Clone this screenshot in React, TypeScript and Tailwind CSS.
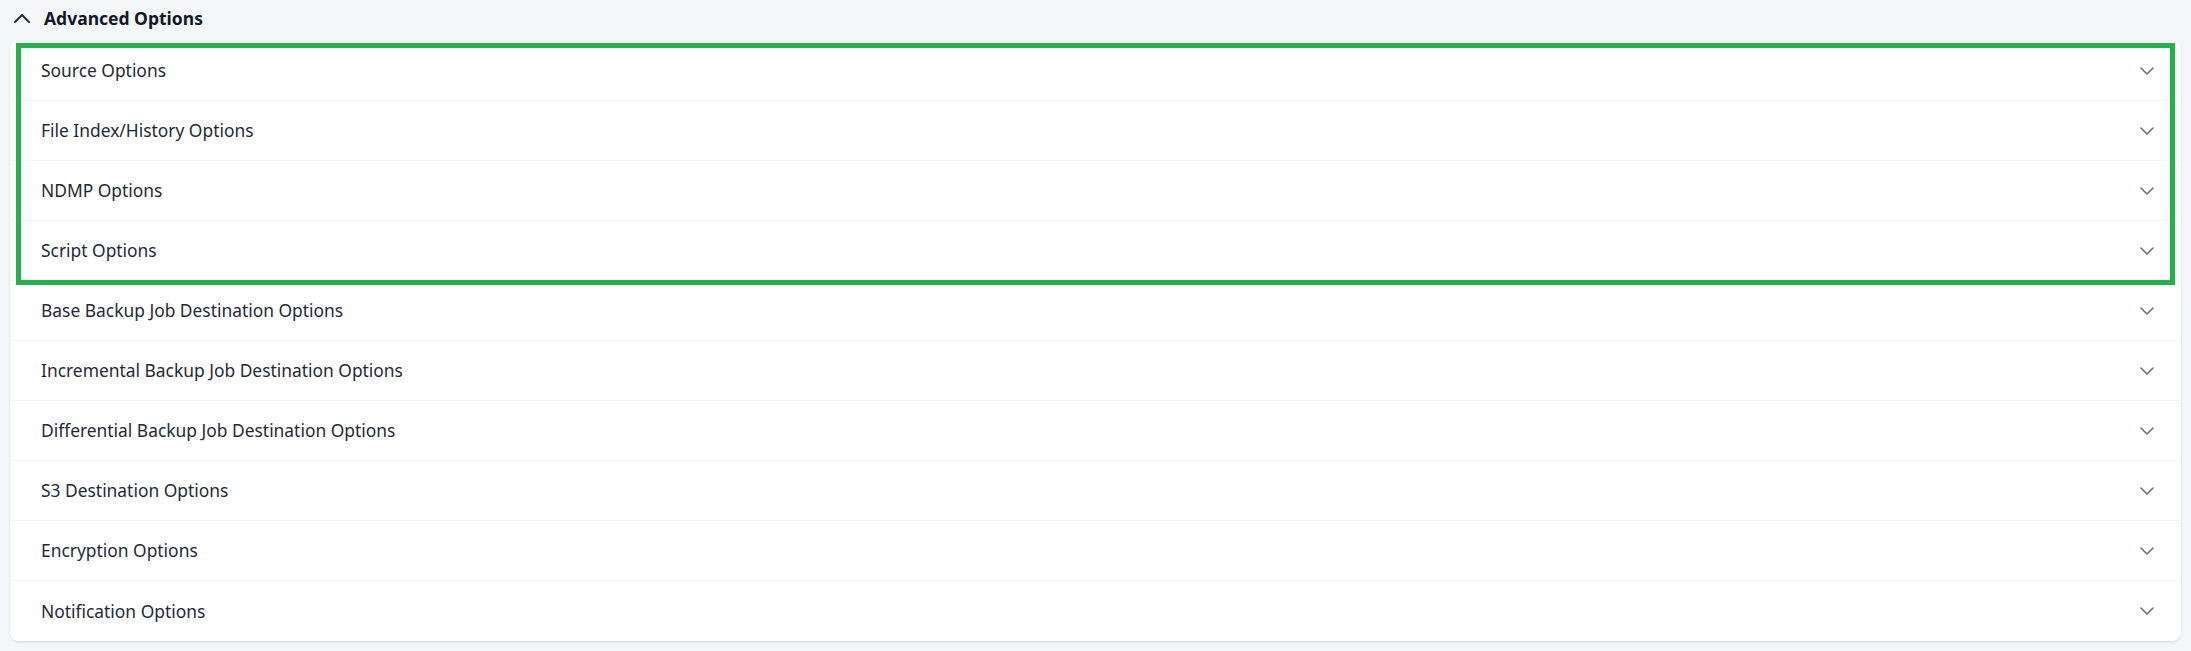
import React from "react";

const sections = [
  "Source Options",
  "File Index/History Options",
  "NDMP Options",
  "Script Options",
  "Base Backup Job Destination Options",
  "Incremental Backup Job Destination Options",
  "Differential Backup Job Destination Options",
  "S3 Destination Options",
  "Encryption Options",
  "Notification Options",
];

function ChevronDown() {
  return (
    <svg width="14" height="8" viewBox="0 0 14 8" fill="none">
      <path d="M1 1l6 6 6-6" stroke="#6b7280" strokeWidth="1.6" strokeLinecap="round" strokeLinejoin="round" />
    </svg>
  );
}

function ChevronUp() {
  return (
    <svg width="16" height="9" viewBox="0 0 16 9" fill="none">
      <path d="M1 8l7-7 7 7" stroke="#1f2937" strokeWidth="1.8" strokeLinecap="round" strokeLinejoin="round" />
    </svg>
  );
}

export default function App() {
  return (
    <div className="min-h-screen bg-[#f5f6f8] font-['Noto_Sans',sans-serif]">
      <button className="flex h-[37px] items-center gap-[14px] pl-[14px] text-[17.5px] font-bold text-[#111827]">
        <ChevronUp />
        <span>Advanced Options</span>
      </button>
      <div className="relative mx-[10px] mt-[4px] rounded-lg bg-white shadow-sm">
        {sections.map((s, i) => (
          <div
            key={s}
            className={
              "flex h-[60px] items-center justify-between pl-[31px] pr-[27px] text-[17.4px] text-[#1f2937] " +
              (i < sections.length - 1 ? "border-b border-[#f5f5f6]" : "")
            }
          >
            <span>{s}</span>
            <ChevronDown />
          </div>
        ))}
        <div className="pointer-events-none absolute left-[6px] right-[6px] top-[2px] h-[242px] border-[5px] border-[#22b14c]" />
      </div>
    </div>
  );
}
